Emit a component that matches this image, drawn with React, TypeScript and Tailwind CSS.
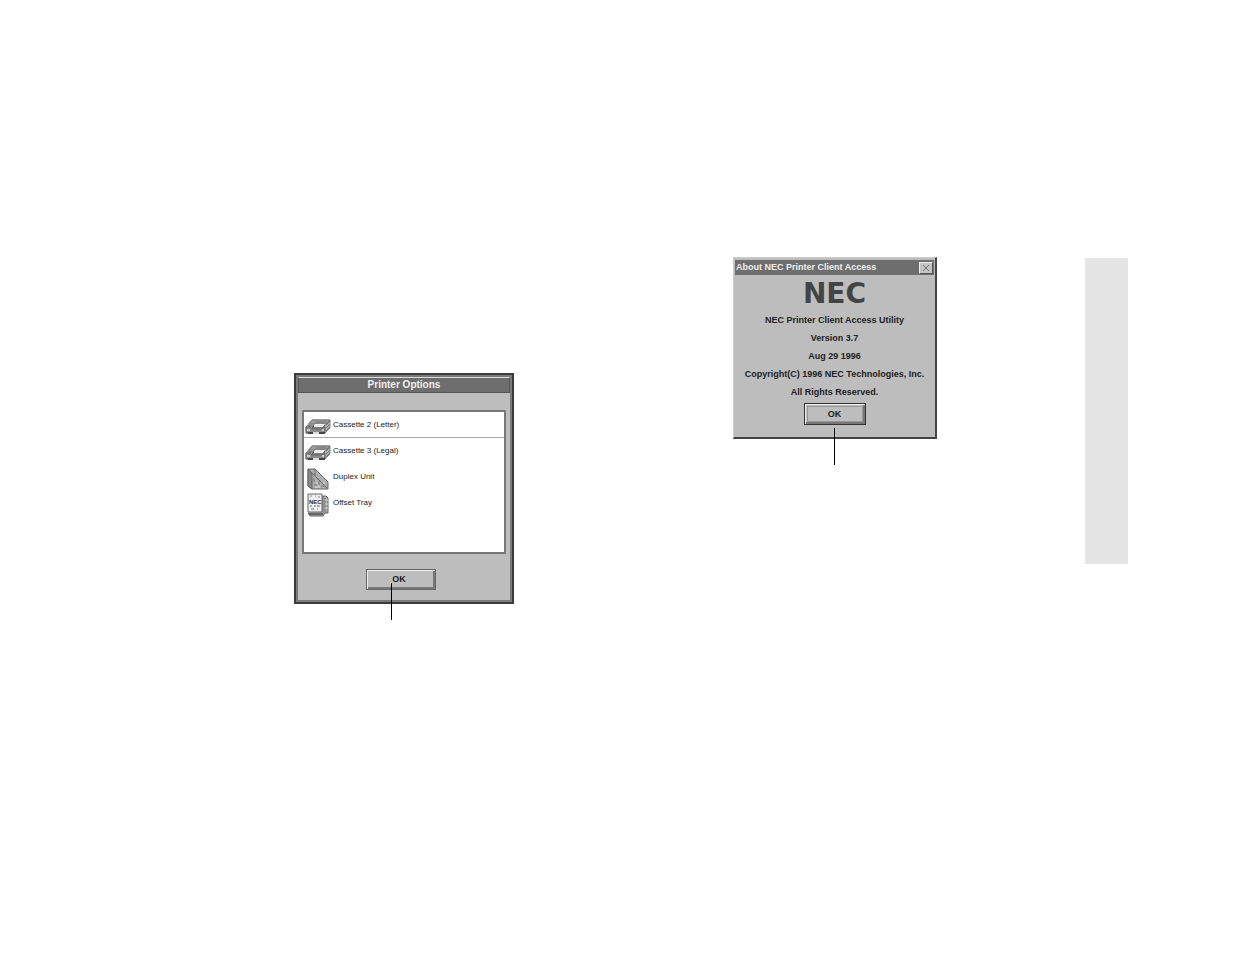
const OPTIONS = [
  { label: "Cassette 2 (Letter)", icon: <CassetteIcon />, selected: true },
  { label: "Cassette 3 (Legal)", icon: <CassetteIcon /> },
  { label: "Duplex Unit", icon: <DuplexIcon /> },
  { label: "Offset Tray", icon: <OffsetTrayIcon /> },
];

const ABOUT_LINES = [
  "NEC Printer Client Access Utility",
  "Version 3.7",
  "Aug 29 1996",
  "Copyright(C) 1996 NEC Technologies, Inc.",
  "All Rights Reserved.",
];

function CassetteIcon() {
  return (
    <svg width="26" height="16" viewBox="0 0 26 16" aria-hidden="true">
      <path d="M1 8 7 1H25V9L20 14H1Z" fill="#b0b0b0" stroke="#888" />
      <path d="M7 1H25L21 5H4Z" fill="#a0a0a0" stroke="#777" />
      <path d="M11 2H22L20 5H9Z" fill="#888" />
      <path d="M10 5H20L18 8H8Z" fill="#eee" />
      <path d="M3 7H9L7 9H18L20 6" stroke="#555" fill="none" />
      <path d="M21 6 25 2M21 9 25 5M21 12 25 8" stroke="#777" />
      <path d="M1 8H5L7 10H17L18 8H20V14H1Z" fill="#8c8c8c" stroke="#666" />
      <path d="M2 10H5V12H2ZM17 10H19V12H17Z" fill="#ccc" />
      <path d="M3 14H8M14 14H20" stroke="#444" strokeWidth="2" />
      <path d="M8 13H14V15H8Z" fill="#ddd" />
    </svg>
  );
}

function DuplexIcon() {
  return (
    <svg width="22" height="22" viewBox="0 0 22 22" aria-hidden="true">
      <path d="M1 1H8L21 14V21H5L1 18Z" fill="#b0b0b0" stroke="#666" />
      <path d="M1 1 5 5V21L1 18Z" fill="#888" stroke="#666" />
      <path d="M8 1V8L17 17M5 5 20 20" stroke="#666" fill="none" />
      <path d="M7 10V14M7 17H10M12 13V17M14 18H18M10 11H12" stroke="#777" />
      <path d="M9 15H11M16 15H18M8 19H13" stroke="#e0e0e0" />
    </svg>
  );
}

function OffsetTrayIcon() {
  return (
    <svg width="22" height="24" viewBox="0 0 22 24" aria-hidden="true">
      <path d="M5 3H19L21 5V20H18L16 23H3L1 20" fill="#aaa" stroke="#666" />
      <path d="M16 3V20M18 5V20" stroke="#777" />
      <path d="M18 7H21M18 11H21M18 15H21" stroke="#ddd" />
      <path d="M1 1H15V19H1Z" fill="#eee" stroke="#666" />
      <path d="M3 3H5M8 3H9M11 4H13" stroke="#888" />
      <text x="2" y="11" fontSize="6" fontWeight="bold" fill="#333">
        NEC
      </text>
      <path d="M3 13H5M8 12V14M10 13H13M4 16H7M10 16H11" stroke="#777" />
      <path d="M2 21H16" stroke="#666" strokeWidth="2" />
    </svg>
  );
}

function PrinterOptions() {
  return (
    <section
      aria-labelledby="options-title"
      className="mt-[116px] border-2 border-[#3c3c3c] bg-[#bdbdbd]"
    >
      <div className="border-2 border-[#7a7a7a] pb-[10px]">
        <h2
          id="options-title"
          className="h-4 border border-[#555] border-t-[#ddd] bg-[#6e6e6e] text-center text-[10px] leading-[14px] font-bold text-[#f0f0f0]"
        >
          Printer Options
        </h2>
        <ul
          role="listbox"
          aria-label="Installed options"
          className="mx-1 mt-[17px] h-36 border-2 border-[#777] bg-white text-[8px] text-[#222]"
        >
          {OPTIONS.map((option) => (
            <li
              key={option.label}
              role="option"
              aria-selected={!!option.selected}
              className={`flex h-[26px] items-center border-b ${
                option.selected ? "border-[#aaa]" : "border-transparent"
              }`}
            >
              <span className="mt-1 flex w-[29px] shrink-0 justify-center pr-[2px]">{option.icon}</span>
              {option.label}
            </li>
          ))}
        </ul>
        <div className="mt-[15px] flex justify-center pr-[6px]">
          <button
            type="button"
            className="relative h-[21px] w-[70px] border border-[#666] bg-[#bdbdbd] pr-1 text-[9px] font-bold text-[#222] shadow-[inset_1px_1px_#eee,inset_-2px_-2px_#777]"
          >
            OK
            {/* Callout line */}
            <span className="absolute top-[13px] left-6 h-[37px] w-px bg-black" />
          </button>
        </div>
      </div>
    </section>
  );
}

function AboutDialog() {
  return (
    <section
      aria-labelledby="about-title"
      className="border-t border-r-2 border-b-2 border-l border-[#444] border-t-[#ccc] border-l-[#ccc] bg-[#bdbdbd] px-px pt-[2px] pb-3 text-[9px] font-bold text-[#222]"
    >
      <div className="flex h-[15px] items-center justify-between bg-[#6e6e6e] px-px text-[#eee]">
        <h2 id="about-title" className="whitespace-nowrap">About NEC Printer Client Access</h2>
        <button
          type="button"
          aria-label="Close"
          className="flex h-3 w-[14px] items-center justify-center border border-[#eee] border-r-[#555] border-b-[#555] bg-[#c4c4c4]"
        >
          <svg width="8" height="8" viewBox="0 0 8 8" stroke="#777" aria-hidden="true">
            <path d="M1 1 7 7M7 1 1 7" />
          </svg>
        </button>
      </div>
      <div className="mt-[3px] h-8 text-center font-['DejaVu_Sans'] text-[28px] leading-8 text-[#444]">
        NEC
      </div>
      <div className="mt-px text-center leading-[18px] whitespace-nowrap">
        {ABOUT_LINES.map((line) => (
          <p key={line}>{line}</p>
        ))}
      </div>
      <div className="mt-[2px] flex justify-center">
        <button
          type="button"
          className="relative h-[22px] w-[62px] border border-[#333] bg-[#bdbdbd] shadow-[inset_1px_1px_#eee,inset_-2px_-2px_#777]"
        >
          <span className="m-[2px] block border border-[#999] leading-[14px]">OK</span>
          {/* Callout line */}
          <span className="absolute top-6 left-[29px] h-[37px] w-px bg-black" />
        </button>
      </div>
    </section>
  );
}

export default function App() {
  return (
    <main className="grid min-h-screen grid-cols-[294fr_220px_219fr_204px_148fr_43px_107fr] items-start bg-white pt-[257px] font-['Liberation_Sans',sans-serif]">
      <div className="col-start-2">
        <PrinterOptions />
      </div>
      <div className="col-start-4">
        <AboutDialog />
      </div>
      <aside className="col-start-6 mt-px h-[306px] bg-[#e5e5e5]" />
    </main>
  );
}
